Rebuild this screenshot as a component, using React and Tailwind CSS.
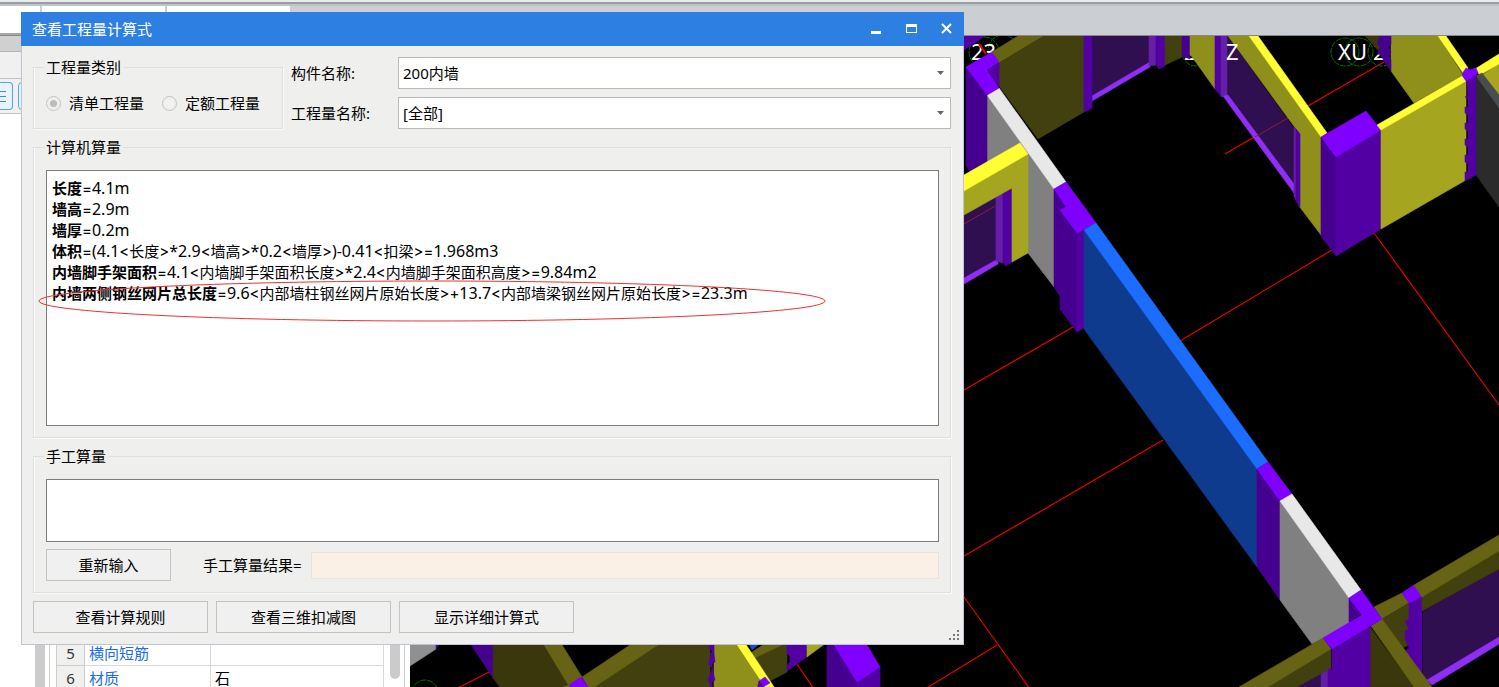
import { useState } from "react";

const OLIVE_TOP = "#666314";
const OLIVE = "#42400e";
const OLIVE_DARK = "#3a370c";
const MOSS = "#8f8f1c";
const YELLOW = "#ffff33";
const MUSTARD = "#a5a520";
const VIOLET = "#8000ff";
const PURPLE = "#5200a3";
const PURPLE_DARK = "#46008f";
const FRAME = "#641fa6";
const GLASS = "#2f0f50";
const SILL = "#8f2ff5";

const gridLines = [
  [1225, 154, 1384, 62],
  [1332, 250, 1180, 341],
  [1073, 327, 964, 390],
  [1163, 440, 964, 556],
  [1374, 233, 1499, 405],
  [964, 597, 1030, 689],
  [925, 689, 997, 645],
  [448, 693, 489, 672],
  [797, 664, 816, 692],
];

const backFaces = [
  [PURPLE, "964,36 985,36 964,50"],
  [OLIVE_TOP, "992,52 1018,36 1044,36 999,63"],
  [OLIVE, "999,63 1044,36 1084,36 1084,112 1038,139 999,86"],
  [GLASS, "1092,36 1150,36 1150,64 1092,98"],
  [SILL, "1092,96 1150,62 1150,67 1092,101"],
  [PURPLE, "1084,36 1092,36 1092,108 1084,112"],
  [FRAME, "1149,36 1156,36 1156,65 1149,66"],
  [PURPLE, "1156,36 1165,36 1165,66 1159,69 1156,64"],
  [OLIVE, "1165,36 1182,36 1182,57 1165,65"],
  [PURPLE_DARK, "1182,36 1190,36 1190,59 1182,56"],
  [MOSS, "1190,36 1215,36 1215,89 1190,54"],
  [GLASS, "1227,36 1294,128 1294,185 1227,96"],
  [PURPLE, "1215,36 1222,36 1222,97 1215,89"],
  [FRAME, "1221,36 1227,36 1227,95 1221,97"],
  [SILL, "1223,96 1228,95 1294,184 1294,193"],
  [MOSS, "1228,36 1249,36 1321,137 1321,235 1299,206 1299,133"],
  [FRAME, "1294,127 1296,129 1296,200 1294,196"],
  [PURPLE, "1296,129 1300,134 1300,207 1296,201"],
  [YELLOW, "1249,36 1258,36 1327,133 1321,137"],
  [PURPLE_DARK, "1321,137 1336,157 1336,256 1321,236"],
  [PURPLE, "1336,157 1381,130 1381,229 1336,256"],
  [VIOLET, "1321,137 1366,111 1381,130 1336,157"],
  [OLIVE_DARK, "1365,36 1380,36 1380,52"],
  [MOSS, "1391,36 1438,36 1463,75 1414,103 1391,71"],
  [
    PURPLE_DARK,
    "1380,36 1391,36 1391,44 1389,47 1391,52 1389,56 1391,60 1391,71 1385,63 1381,55 1378,54 1380,46 1377,44",
  ],
  [MUSTARD, "1381,130 1466,80 1466,180 1381,229"],
  [YELLOW, "1377,125 1462,76 1466,81 1381,130"],
  [YELLOW, "1438,36 1446,36 1468,68 1463,73"],
  [MUSTARD, "1482,75 1499,64 1499,95"],
  [YELLOW, "1475,69 1499,54 1499,64 1480,75"],
  ["#2b2b2b", "1476,76 1499,108 1499,207 1476,175"],
  ["#4a4d50", "1476,76 1482,73 1499,95 1499,108"],
  [
    PURPLE,
    "1466,78 1476,74 1476,175 1465,181 1465,172 1468,172 1468,164 1465,162 1465,155 1468,155 1468,147 1465,145 1465,139 1468,139 1468,131 1465,129 1465,123 1468,123 1468,115 1465,113 1465,107 1468,107 1468,99 1465,97 1468,95",
  ],
  [VIOLET, "1462,74 1466,68 1470,70 1476,68 1478,73 1466,81"],
];

const frontFaces = [
  ["#808080", "987,95 1054,189 1054,287 1028,253 987,200"],
  ["#e8e8e8", "987,95 999,88 1066,182 1054,189"],
  [PURPLE_DARK, "966,67 987,95 987,163 970,172 966,166"],
  [VIOLET, "966,67 992,52 999,62 987,70 999,88 987,95"],
  [PURPLE, "987,70 999,63 999,87"],
  [GLASS, "964,214 997,196 997,262 964,280"],
  [SILL, "964,278 998,259 998,264 964,284"],
  [FRAME, "996,196 1003,192 1003,263 996,261"],
  [PURPLE, "1003,192 1012,187 1012,262 1006,266 1003,262"],
  [MUSTARD, "964,191 1028,154 1028,253 1012,262 1012,188 964,215"],
  [YELLOW, "964,175 1020,143 1028,154 964,191"],
  [
    PURPLE_DARK,
    "1054,189 1066,207 1060,210 1077,233 1077,332 1060,309 1060,296 1054,287",
  ],
  [PURPLE, "1077,233 1084,229 1084,328 1077,332"],
  [VIOLET, "1054,189 1066,182 1096,223 1077,233 1060,210 1066,207"],
  ["#0f3b8f", "1084,230 1257,469 1257,567 1084,329"],
  ["#1b6cff", "1084,230 1096,223 1268,462 1257,469"],
  [PURPLE_DARK, "1257,469 1280,501 1280,600 1257,567"],
  [VIOLET, "1257,469 1268,462 1292,494 1280,501"],
  ["#808080", "1280,501 1349,598 1349,625 1312,644 1280,600"],
  ["#e8e8e8", "1280,501 1292,494 1361,590 1349,598"],
  [OLIVE_TOP, "1374,607 1402,593 1409,603 1382,619"],
  [OLIVE, "1382,619 1409,603 1409,645 1402,648"],
  [
    PURPLE,
    "1409,603 1422,596 1422,682 1405,651 1409,648 1405,638 1405,631 1409,629 1405,622 1409,619",
  ],
  [VIOLET, "1402,593 1414,585 1422,596 1409,603"],
  [GLASS, "1423,611 1499,569 1499,640 1426,682 1423,680"],
  [OLIVE, "1422,597 1499,551 1499,569 1422,611"],
  [OLIVE_TOP, "1414,585 1499,535 1499,551 1422,597"],
  [SILL, "1427,680 1499,637 1499,644 1432,685"],
  [OLIVE_DARK, "1370,627 1414,687 1370,687"],
  [OLIVE_TOP, "1371,626 1382,619 1432,687 1414,687"],
  [GLASS, "1297,687 1321,673 1321,687"],
  [FRAME, "1321,673 1328,669 1328,687 1321,687"],
  [OLIVE, "1268,687 1331,649 1331,668 1297,687"],
  [OLIVE_TOP, "1239,687 1323,638 1331,649 1268,687"],
  [PURPLE, "1332,649 1370,627 1370,687 1328,687 1328,670 1332,668"],
  [PURPLE_DARK, "1349,598 1361,614 1349,622"],
  [VIOLET, "1349,598 1361,590 1382,619 1332,649 1323,638 1362,615"],
];

const lowerFaces = [
  ["#8f9090", "410,640 436,640 436,649 410,666"],
  [PURPLE, "436,640 442,640 436,649"],
  [PURPLE_DARK, "468,640 493,640 493,678"],
  [OLIVE_DARK, "493,640 541,640 569,685 565,690 502,690 493,678"],
  [OLIVE_TOP, "541,640 559,640 582,677 569,686"],
  [OLIVE, "590,690 658,645 710,645 710,690"],
  [OLIVE_TOP, "582,677 630,645 658,645 590,690"],
  [OLIVE_TOP, "555,690 569,685 575,690"],
  [VIOLET, "569,685 581,677 590,690 573,690"],
  [YELLOW, "586,692 590,688 593,692"],
  [MOSS, "714,640 738,640 760,680 760,690 714,690"],
  [
    PURPLE,
    "710,640 714,640 714,654 715,662 712,664 713,672 715,680 712,682 712,690 710,690 710,683 708,680 710,675 712,668 709,665 710,656 712,651 709,648",
  ],
  [OLIVE, "752,657 775,645 787,645 787,672 768,682"],
  [OLIVE_TOP, "752,652 763,645 782,645 752,659"],
  ["#1c4fd0", "747,640 764,640 752,650"],
  [
    PURPLE,
    "787,640 808,640 808,648 806,652 808,656 787,671 787,666 790,662 790,656 787,654",
  ],
  [MUSTARD, "807,640 830,640 807,657"],
  [YELLOW, "734,640 743,640 776,690 767,690"],
  [VIOLET, "759,681 765,677 770,683 763,687"],
  [PURPLE, "759,681 763,687 763,690 757,690"],
  [PURPLE_DARK, "827,640 834,645 857,682 857,690 827,690"],
  [PURPLE, "857,682 880,667 880,690 857,690"],
  [VIOLET, "834,645 867,645 880,667 857,682"],
];

// each face is outlined in its own colour so that neighbours leave no gap
function Faces({ items }) {
  return items.map(([color, points], i) => (
    <polygon key={i} fill={color} stroke={color} strokeWidth="0.6" points={points} />
  ));
}

function AxisLabel({ x, children }) {
  return (
    <text
      x={x}
      y="60"
      fill="#ffffff"
      fontSize="22"
      fontFamily="'Noto Sans', sans-serif"
    >
      {children}
    </text>
  );
}

function ModelViewport() {
  return (
    <svg
      viewBox="410 36 1089 651"
      preserveAspectRatio="xMinYMin slice"
      className="block h-full w-full bg-black"
    >
      <g stroke="#e60000" strokeWidth="1.2">
        {gridLines.map(([x1, y1, x2, y2]) => (
          <line key={`${x1}-${y1}`} x1={x1} y1={y1} x2={x2} y2={y2} />
        ))}
      </g>
      <g fill="none" stroke="#007000" strokeDasharray="6 1">
        <circle cx="984" cy="52" r="15" />
        <circle cx="1003" cy="50" r="15" />
        <circle cx="1196" cy="52" r="14" />
        <circle cx="1232" cy="52" r="14" />
        <circle cx="1345" cy="52" r="14" />
        <circle cx="1359" cy="52" r="14" />
        <circle cx="1382" cy="52" r="14" />
        <circle cx="425" cy="693" r="13" />
      </g>
      <AxisLabel x="971">23</AxisLabel>
      <line x1="979" y1="44" x2="986" y2="54" stroke="#e60000" strokeWidth="2" />
      <AxisLabel x="1184">2</AxisLabel>
      <AxisLabel x="1338">XU</AxisLabel>
      <AxisLabel x="1373">2</AxisLabel>
      <Faces items={backFaces} />
      <AxisLabel x="1226">Z</AxisLabel>
      <line x1="1255" y1="137" x2="1288" y2="118" stroke="#8c1b3c" />
      <Faces items={frontFaces} />
      <line x1="964" y1="224" x2="995" y2="206" stroke="#8c1b3c" />
      <Faces items={lowerFaces} />
    </svg>
  );
}

function TopStrip() {
  return (
    <header className="flex h-9 flex-col border-b border-[#85898c] bg-[#cbcfd3]">
      <div className="h-1 border-b-2 border-[#999da0] bg-[#e9ecee]" />
      <div className="flex flex-1 gap-0.5 border-t-2 border-[#bfc3c6]">
        <div className="w-10 border-b-2 border-[#a4a6a8] bg-white" />
        <div className="w-[123px] border-b-2 border-[#a4a6a8] bg-white" />
        <div className="w-[123px] border-b-2 border-[#a4a6a8] bg-white" />
      </div>
    </header>
  );
}

function PropertyPanel() {
  return (
    <aside className="flex w-[410px] shrink-0 flex-col overflow-hidden bg-white">
      <div className="h-4 shrink-0 border-b border-[#b4b4b4] bg-[#d0d0d0]" />
      <div className="h-[26px] shrink-0 bg-[#f0f0f0]" />
      <div className="flex h-9 shrink-0 items-center gap-[5px] border-y border-[#c3c3c3] bg-[#f0f0f0]">
        <div className="flex h-7 w-[13px] flex-col items-start justify-center gap-1 rounded-r border border-l-0 border-[#55a5ee] bg-[#e8f3fd]">
          <span className="h-px w-1.5 bg-[#3c8be0]" />
          <span className="h-px w-1.5 bg-[#3c8be0]" />
          <span className="h-px w-1.5 bg-[#3c8be0]" />
        </div>
        <div className="h-7 w-8 rounded border border-[#55a5ee] bg-[#e8f3fd]" />
      </div>
      <div className="flex flex-1 items-stretch">
        <div className="ml-[35px] w-2.5 bg-[#cbcbcb]" />
        <div className="ml-1 w-px bg-[#cfcfcf]" />
        <div className="ml-1.5 flex w-[328px] flex-col justify-end">
          <table className="w-full table-fixed border-collapse text-[15px] leading-5">
            <tbody>
              <tr className="h-[26px]">
                <td className="w-7 border border-[#cccccc] bg-[#f0f0ef] text-center font-['Noto_Sans'] text-[#333333]">
                  5
                </td>
                <td className="w-[126px] border border-[#d9d9d9] pl-1 text-[#1a6bf0]">
                  横向短筋
                </td>
                <td className="border border-[#d9d9d9]" />
              </tr>
              <tr className="h-[21px] align-top leading-6">
                <td className="border border-b-0 border-[#cccccc] bg-[#f0f0ef] p-0 text-center font-['Noto_Sans'] text-[#333333]">
                  <div className="h-[21px]">6</div>
                </td>
                <td className="border border-b-0 border-[#d9d9d9] p-0 pl-1 text-[#1a6bf0]">
                  <div className="h-[21px]">材质</div>
                </td>
                <td className="border border-b-0 border-[#d9d9d9] p-0 pl-1 text-black">
                  <div className="h-[21px]">石</div>
                </td>
              </tr>
            </tbody>
          </table>
        </div>
        <div className="mb-2 ml-1.5 w-2.5 rounded-b-full bg-[#cbcbcb]" />
        <div className="ml-1 w-px bg-[#cfcfcf]" />
      </div>
    </aside>
  );
}

function GroupBox({ title, className = "", children }) {
  return (
    <fieldset
      className={`min-w-0 border border-[#e0e0e0] pr-[11px] pl-3 shadow-[1px_1px_0_#fbfbfb,inset_1px_0_0_#fbfbfb] ${className}`}
    >
      <legend className="-ml-0.5 px-0.5 leading-5">{title}</legend>
      {children}
    </fieldset>
  );
}

function Radio({ label, ...props }) {
  return (
    <label className="flex items-center gap-2">
      <input
        type="radio"
        name="kind"
        disabled
        className="size-[15px] appearance-none rounded-full border border-[#c4c4c4] bg-[#f2f2f1] bg-clip-content p-[3px] checked:bg-[#bcbcbc]"
        {...props}
      />
      {label}
    </label>
  );
}

function ComboBox({ id, options }) {
  return (
    <div className="relative">
      <select
        id={id}
        className="h-8 w-full appearance-none border border-[#b9b9b9] bg-white pl-1 outline-none"
      >
        {options.map((option) => (
          <option key={option}>{option}</option>
        ))}
      </select>
      <svg
        viewBox="0 0 7 4"
        className="pointer-events-none absolute top-3.5 right-[7px] h-1 w-[7px]"
      >
        <path d="M0 0H7L3.5 4Z" fill="#666666" />
      </svg>
    </div>
  );
}

function PushButton({ className = "", children, ...props }) {
  return (
    <button
      type="button"
      className={`h-8 border border-[#c3c3c3] bg-[#f0f0f0] ${className}`}
      {...props}
    >
      {children}
    </button>
  );
}

const results = [
  ["长度", "=4.1m"],
  ["墙高", "=2.9m"],
  ["墙厚", "=0.2m"],
  ["体积", "=(4.1<长度>*2.9<墙高>*0.2<墙厚>)-0.41<扣梁>=1.968m3"],
  [
    "内墙脚手架面积",
    "=4.1<内墙脚手架面积长度>*2.4<内墙脚手架面积高度>=9.84m2",
  ],
  [
    "内墙两侧钢丝网片总长度",
    "=9.6<内部墙柱钢丝网片原始长度>+13.7<内部墙梁钢丝网片原始长度>=23.3m",
  ],
];

// numbers are set one step larger than the Chinese names, operators wider still
function Formula({ text }) {
  return text.split(/([\u4e00-\u9fff]+|[=<>+]+)/).map((part, i) => {
    if (/[\u4e00-\u9fff]/.test(part)) return part;
    return (
      <span
        key={i}
        className={
          /[=<>+]/.test(part)
            ? "font-['Inter'] text-[15px] leading-none"
            : "text-base leading-none"
        }
      >
        {part}
      </span>
    );
  });
}

function QuantityDialog() {
  const [manual, setManual] = useState("");

  return (
    <section
      role="dialog"
      aria-labelledby="dialog-title"
      className="absolute top-3 right-[535px] left-[21px] border border-t-0 border-[#bcc5d8] bg-[#efefed] text-[15px] text-black"
    >
      <div className="-mx-px flex h-[34px] items-center bg-[#2d80e2] pl-[11px] text-white">
        <h1 id="dialog-title" className="flex-1">
          查看工程量计算式
        </h1>
        <button type="button" aria-label="最小化" className="flex h-full w-[35px] items-center justify-center">
          <svg viewBox="0 0 12 12" className="size-3">
            <path d="M0 8H10V11H0Z" fill="currentColor" />
          </svg>
        </button>
        <button type="button" aria-label="最大化" className="flex h-full w-[35px] items-center justify-center">
          <svg viewBox="0 0 12 12" className="size-3">
            <path d="M0 1H11V10H0ZM1 4V9H10V4Z" fill="currentColor" fillRule="evenodd" />
          </svg>
        </button>
        <button type="button" aria-label="关闭" className="flex h-full w-[35px] items-center justify-center">
          <svg viewBox="0 0 12 12" className="size-3">
            <path d="M1 1L10 10M10 1L1 10" stroke="currentColor" strokeWidth="2" />
          </svg>
        </button>
      </div>

      <div className="flex flex-col gap-2 py-[11px] pr-3 pl-[11px]">
        <div className="flex gap-2">
          <GroupBox title="工程量类别" className="w-[250px]">
            <div className="flex gap-[18px] pt-4 leading-5">
              <Radio label="清单工程量" defaultChecked />
              <Radio label="定额工程量" />
            </div>
          </GroupBox>
          <div className="grid flex-1 grid-cols-[107px_1fr] items-center gap-y-2">
            <label htmlFor="component">构件名称:</label>
            <ComboBox id="component" options={["200内墙"]} />
            <label htmlFor="quantity">工程量名称:</label>
            <ComboBox id="quantity" options={["[全部]"]} />
          </div>
        </div>

        <GroupBox title="计算机算量" className="pt-[13px] pb-[11px]">
          <div className="relative">
            <div className="h-64 border border-[#7c7c7c] bg-white px-[5px] py-[7px] leading-[21px]">
              {results.map(([name, formula]) => (
                <p key={name} className="h-[21px] whitespace-nowrap">
                  <b>{name}</b>
                  <Formula text={formula} />
                </p>
              ))}
            </div>
            <svg
              viewBox="0 0 788 42"
              className="pointer-events-none absolute top-[110px] -left-2 h-[42px] w-[788px]"
            >
              <ellipse cx="394" cy="21" rx="393" ry="20" fill="none" stroke="#f03030" />
            </svg>
          </div>
        </GroupBox>

        <GroupBox title="手工算量" className="pt-[13px] pb-[11px]">
          <textarea
            aria-label="手工算量"
            value={manual}
            onChange={(e) => setManual(e.target.value)}
            className="block h-[63px] w-full resize-none border border-[#7c7c7c] bg-white px-1 outline-none"
          />
          <div className="mt-[7px] flex items-center">
            <PushButton className="w-[125px]" onClick={() => setManual("")}>
              重新输入
            </PushButton>
            <label htmlFor="manual-result" className="ml-8 w-[108px]">
              手工算量结果=
            </label>
            <input
              id="manual-result"
              readOnly
              className="h-[27px] min-w-0 flex-1 border border-[#e6e4e2] bg-[#fbf0e5] px-1 outline-none"
            />
          </div>
        </GroupBox>

        <div className="flex gap-2">
          <PushButton className="w-[175px]">查看计算规则</PushButton>
          <PushButton className="w-[175px]">查看三维扣减图</PushButton>
          <PushButton className="w-[175px]">显示详细计算式</PushButton>
        </div>
      </div>

      <svg viewBox="0 0 10 10" className="absolute right-1 bottom-1 size-2.5" fill="#76767c">
        <path d="M8 0h2v2h-2zM8 4h2v2h-2zM8 8h2v2h-2zM4 4h2v2h-2zM4 8h2v2h-2zM0 8h2v2h-2z" />
      </svg>
    </section>
  );
}

export default function App() {
  return (
    <div className="relative flex h-screen flex-col overflow-hidden bg-white font-['Noto_Sans','Noto_Sans_CJK_SC',sans-serif]">
      <TopStrip />
      <main className="flex min-h-0 flex-1">
        <PropertyPanel />
        <div className="min-w-0 flex-1">
          <ModelViewport />
        </div>
      </main>
      <QuantityDialog />
    </div>
  );
}
